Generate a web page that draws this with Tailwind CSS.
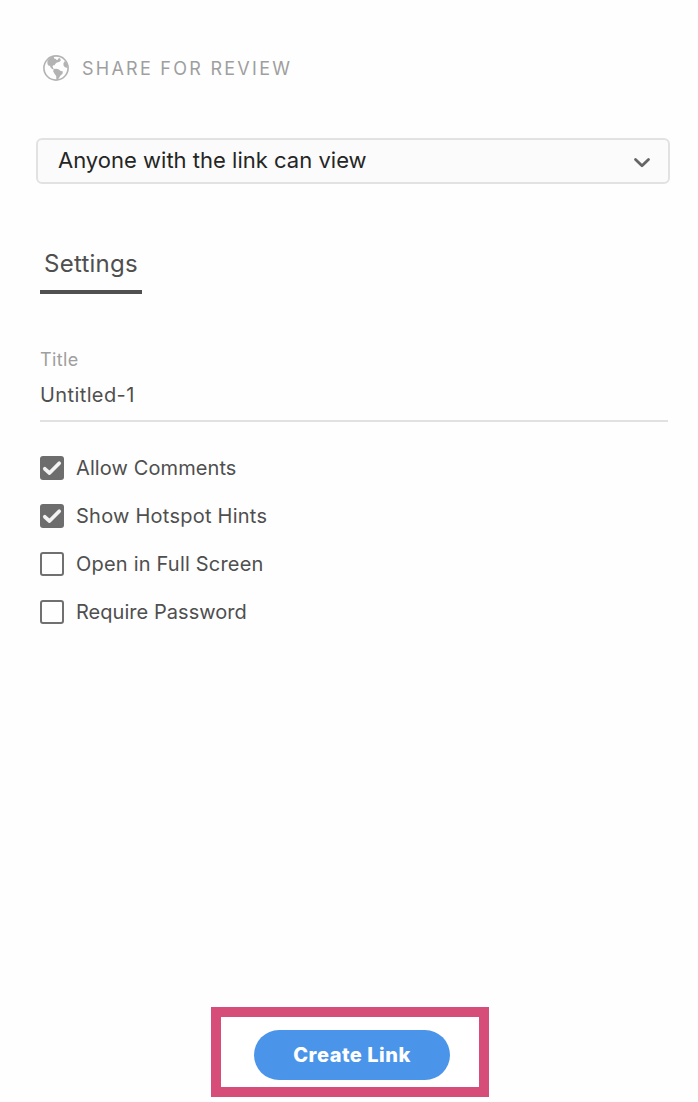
<!DOCTYPE html>
<html lang="en">
<head>
<meta charset="utf-8">
<title>Share for Review</title>
<script src="https://cdn.jsdelivr.net/npm/@tailwindcss/browser@4"></script>
</head>
<body class="bg-[#fefefe] font-['Inter',sans-serif] text-[#4f4f4f]">
<main class="flex h-[1102px] w-[698px] flex-col overflow-hidden">
  <header class="mt-[54px] ml-[42px] flex h-7 items-center gap-3 text-[#9f9f9f]">
    <svg class="size-7" viewBox="0 0 28 28" fill="none">
      <circle cx="14" cy="14" r="12.1" stroke="#b3b3b3" stroke-width="1.6"/>
      <path fill="#b3b3b3" d="M11.500 2.200L8 3.800 5.600 6.400 5.300 9 6 11.300 8 12 8.800 13.800 10.500 15.300 12 15.200 11 13.800 10.500 12.300 11.200 11.200 12.600 11.300 13.200 10 14.500 8.700 17.500 7.800 18.800 6.400 18.200 4.600 16.800 4 15.800 5.700 14.500 6 13.800 4.700 12.600 5.100ZM11.600 14.900L14.500 14.700 17 15.500 18.200 16.800 20.900 17.400 20.500 19.700 18.300 21.800 17 24 15.600 26 14.300 25.500 14.200 22 12.500 19.700 11.200 17.500ZM23 7L21.500 9 21.500 11.400 22.900 13.200 25.800 14 25.400 10.500Z"/>
    </svg>
    <h1 class="mt-0.5 text-[18px] leading-7 tracking-[2.26px]">SHARE FOR REVIEW</h1>
  </header>
  <button class="mt-14 ml-9 flex h-[46px] w-[634px] items-center justify-between rounded-md border-2 border-[#e2e2e2] bg-[#fbfbfb] pr-[17px] pl-5 text-[#252525]">
    <span class="-mt-0.5 text-[22px] leading-7 tracking-[0.01px]">Anyone with the link can view</span>
    <svg class="mt-1 h-3 w-[18px]" viewBox="0 0 18 12" fill="none" stroke="#666" stroke-width="2.800" stroke-linecap="round" stroke-linejoin="round"><path d="M2.500 2.500L9 8.800L15.500 2.500"/></svg>
  </button>
  <nav class="mt-[62px] ml-10 flex h-12 w-[102px] justify-center border-b-4 border-[#505050]">
    <span class="text-2xl leading-9 tracking-[0.25px]">Settings</span>
  </nav>
  <label class="mt-[54px] ml-10 flex h-[74px] w-[628px] flex-col border-b-2 border-[#e1e1e1]">
    <span class="text-[18px] leading-6 tracking-[0.4px] text-[#9f9f9f]">Title</span>
    <span class="mt-[9px] text-[20px] leading-7 tracking-[0.4px]">Untitled-1</span>
  </label>
  <section class="mt-[34px] ml-10 flex flex-col gap-6 text-[20px] leading-6">
    <div class="flex items-center gap-3">
      <svg class="size-6" viewBox="0 0 24 24" fill="none"><rect width="24" height="24" rx="3" fill="#6d6d6d"/><path d="M4.800 12.800L9.500 17L19.200 7.200" stroke="#f3f3f3" stroke-width="3.700" stroke-linecap="round" stroke-linejoin="round"/></svg>
      <span class="tracking-[0.1px]">Allow Comments</span>
    </div>
    <div class="flex items-center gap-3">
      <svg class="size-6" viewBox="0 0 24 24" fill="none"><rect width="24" height="24" rx="3" fill="#6d6d6d"/><path d="M4.800 12.800L9.500 17L19.200 7.200" stroke="#f3f3f3" stroke-width="3.700" stroke-linecap="round" stroke-linejoin="round"/></svg>
      <span class="tracking-[0.24px]">Show Hotspot Hints</span>
    </div>
    <div class="flex items-center gap-3">
      <span class="size-6 rounded-[3px] border-2 border-[#707070]"></span>
      <span class="tracking-[0.2px]">Open in Full Screen</span>
    </div>
    <div class="flex items-center gap-3">
      <span class="size-6 rounded-[3px] border-2 border-[#707070]"></span>
      <span class="tracking-[0.04px]">Require Password</span>
    </div>
  </section>
  <footer class="mt-auto mb-[5px] ml-[211px] flex h-[90px] w-[278px] items-start border-10 border-[#d64d79] bg-white pt-[13px] pl-[33px]">
    <button class="h-[50px] w-[196px] rounded-full bg-[#4a95e9] text-[20px] leading-6 font-extrabold tracking-[0.5px] text-white">Create Link</button>
  </footer>
</main>
</body>
</html>
